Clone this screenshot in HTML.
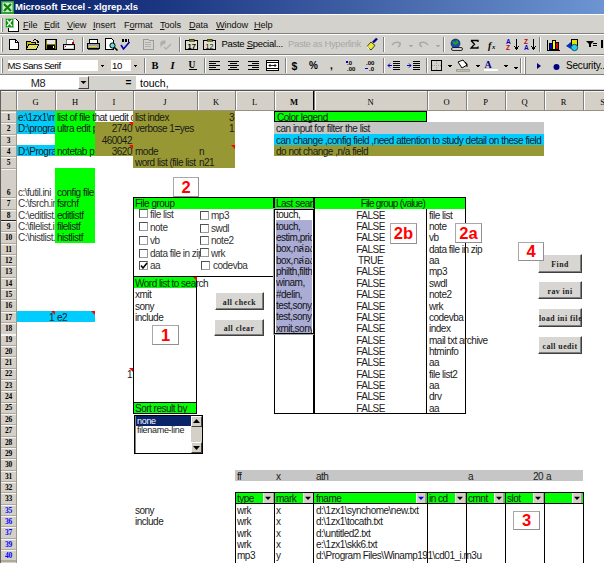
<!DOCTYPE html><html><head><meta charset="utf-8"><style>
*{margin:0;padding:0;box-sizing:border-box}
html,body{width:604px;height:563px;overflow:hidden;background:#fff;position:relative;font-family:"Liberation Sans",sans-serif}
.t{position:absolute;font-size:10px;line-height:11px;white-space:nowrap;color:#1a1a1a;letter-spacing:-0.5px;margin-top:1.1px}
.m{position:absolute;font-size:10px;line-height:12px;white-space:nowrap;color:#000}
.hd{position:absolute;font-family:"Liberation Serif",serif;font-size:8.5px;font-weight:normal;line-height:10px;text-align:center;color:#000}
.bn{position:absolute;background:#d8d6d2;border:1px solid;border-color:#fff #404040 #404040 #fff;box-shadow:inset -1px -1px #808080;font-family:"Liberation Serif",serif;font-weight:bold;font-size:7.8px;text-align:center;white-space:nowrap;letter-spacing:0.45px;color:#202020}
.nb{position:absolute;background:#fff;border:1px solid #a8a8a8;border-right-color:#909090;border-bottom-color:#909090;color:#f00;font-weight:bold;font-size:16.5px;text-align:center;line-height:17px}
.cb{position:absolute;width:9px;height:9px;background:#fff;border:1px solid #505050;border-right-color:#9a9a9a;border-bottom-color:#9a9a9a}
.ic{position:absolute}
</style></head><body>

<div style="position:absolute;left:0.00px;top:0.00px;width:604.00px;height:14.00px;background:linear-gradient(90deg,#0a246a 0%,#1a3480 25%,#6d95d2 100%)"></div>
<svg class="ic" style="left:0;top:0" width="15" height="15"><rect x="1" y="1" width="13" height="13" fill="#30a030"/><rect x="2.5" y="2.5" width="10" height="9.5" fill="#c8eec8"/><path d="M4 4l7 7M11 4l-7 7" stroke="#108010" stroke-width="2.2"/></svg>
<div style="position:absolute;left:15px;top:0px;font:bold 9.5px/14px 'Liberation Sans',sans-serif;color:#fff;white-space:nowrap">Microsoft Excel - xlgrep.xls</div>
<div style="position:absolute;left:0.00px;top:14.00px;width:604.00px;height:76.00px;background:#d4d2cc"></div>
<div style="position:absolute;left:0.00px;top:14.00px;width:604.00px;height:1.00px;background:#fff"></div>
<svg class="ic" style="left:0;top:14px" width="22" height="20" shape-rendering="crispEdges"><rect x="1" y="4" width="1" height="14" fill="#fff"/><rect x="2" y="4" width="1" height="14" fill="#808080"/><path d="M8.5 4.5h7l3 3v9.5h-10z" fill="#fff" stroke="#000"/><path d="M8.5 4.5h7" stroke="#909090"/><rect x="5" y="4" width="9" height="10" fill="#8fd08f"/><rect x="6" y="5" width="7" height="8" fill="#109010"/><path d="M7 6l5 6M12 6l-5 6" stroke="#fff" stroke-width="1.2" shape-rendering="auto"/></svg>
<div class="m" style="left:23px;top:18.5px;font-size:9.2px;letter-spacing:-0.1px;color:#111"><u>F</u>ile</div>
<div class="m" style="left:44px;top:18.5px;font-size:9.2px;letter-spacing:-0.1px;color:#111"><u>E</u>dit</div>
<div class="m" style="left:67px;top:18.5px;font-size:9.2px;letter-spacing:-0.1px;color:#111"><u>V</u>iew</div>
<div class="m" style="left:93px;top:18.5px;font-size:9.2px;letter-spacing:-0.1px;color:#111"><u>I</u>nsert</div>
<div class="m" style="left:124px;top:18.5px;font-size:9.2px;letter-spacing:-0.1px;color:#111">F<u>o</u>rmat</div>
<div class="m" style="left:160px;top:18.5px;font-size:9.2px;letter-spacing:-0.1px;color:#111"><u>T</u>ools</div>
<div class="m" style="left:189px;top:18.5px;font-size:9.2px;letter-spacing:-0.1px;color:#111"><u>D</u>ata</div>
<div class="m" style="left:216px;top:18.5px;font-size:9.2px;letter-spacing:-0.1px;color:#111"><u>W</u>indow</div>
<div class="m" style="left:254px;top:18.5px;font-size:9.2px;letter-spacing:-0.1px;color:#111"><u>H</u>elp</div>
<div style="position:absolute;left:0.00px;top:33.00px;width:604.00px;height:1.00px;background:#808080"></div>
<div style="position:absolute;left:0.00px;top:34.00px;width:604.00px;height:1.00px;background:#fff"></div>
<div style="position:absolute;left:0.00px;top:54.00px;width:604.00px;height:1.00px;background:#808080"></div>
<div style="position:absolute;left:0.00px;top:55.00px;width:604.00px;height:1.00px;background:#fff"></div>
<div style="position:absolute;left:0.00px;top:74.00px;width:604.00px;height:1.00px;background:#808080"></div>
<div style="position:absolute;left:0.00px;top:75.00px;width:604.00px;height:1.00px;background:#fff"></div>
<div style="position:absolute;left:1.00px;top:37.00px;width:2.00px;height:15.00px;border-left:1px solid #fff;border-right:1px solid #808080"></div>
<div style="position:absolute;left:1.00px;top:58.00px;width:2.00px;height:15.00px;border-left:1px solid #fff;border-right:1px solid #808080"></div>
<div style="position:absolute;left:82.00px;top:37.00px;width:2.00px;height:15.00px;border-left:1px solid #808080;border-right:1px solid #fff"></div>
<div style="position:absolute;left:179.00px;top:37.00px;width:2.00px;height:15.00px;border-left:1px solid #808080;border-right:1px solid #fff"></div>
<div style="position:absolute;left:383.00px;top:37.00px;width:2.00px;height:15.00px;border-left:1px solid #808080;border-right:1px solid #fff"></div>
<div style="position:absolute;left:443.00px;top:37.00px;width:2.00px;height:15.00px;border-left:1px solid #808080;border-right:1px solid #fff"></div>
<div style="position:absolute;left:539.00px;top:37.00px;width:2.00px;height:15.00px;border-left:1px solid #808080;border-right:1px solid #fff"></div>
<div style="position:absolute;left:524.00px;top:57.00px;width:2.00px;height:17.00px;border-left:1px solid #fff;border-right:1px solid #808080"></div>
<div style="position:absolute;left:144.00px;top:58.00px;width:2.00px;height:15.00px;border-left:1px solid #808080;border-right:1px solid #fff"></div>
<div style="position:absolute;left:204.00px;top:58.00px;width:2.00px;height:15.00px;border-left:1px solid #808080;border-right:1px solid #fff"></div>
<div style="position:absolute;left:285.00px;top:58.00px;width:2.00px;height:15.00px;border-left:1px solid #808080;border-right:1px solid #fff"></div>
<div style="position:absolute;left:383.00px;top:58.00px;width:2.00px;height:15.00px;border-left:1px solid #808080;border-right:1px solid #fff"></div>
<div style="position:absolute;left:426.00px;top:58.00px;width:2.00px;height:15.00px;border-left:1px solid #808080;border-right:1px solid #fff"></div>
<div style="position:absolute;left:520.00px;top:58.00px;width:2.00px;height:15.00px;border-left:1px solid #808080;border-right:1px solid #fff"></div>

<svg class="ic" style="left:0;top:33px" width="604" height="22" viewBox="0 33 604 22" shape-rendering="crispEdges">
<!-- new -->
<path d="M9.5 39.5h6l2.5 2.5v7.5h-8.5z" fill="#fff" stroke="#000"/>
<path d="M15.5 39.5v2.5h2.5" fill="none" stroke="#000"/>
<!-- open -->
<path d="M26.5 41.5h4l1 1h4v7h-9z" fill="#c8c000" stroke="#000"/>
<path d="M26.5 49.5l2-5h10l-2 5z" fill="#e0e060" stroke="#000"/>
<path d="M33 40.5q3-2 5 1" fill="none" stroke="#000"/>
<rect x="37" y="41" width="2" height="2" fill="#000"/>
<!-- save -->
<rect x="45.5" y="39.5" width="11" height="10" fill="#808000" stroke="#000"/>
<rect x="47" y="40" width="8" height="4" fill="#e8e8e8"/>
<rect x="47" y="45" width="8" height="4" fill="#000"/>
<rect x="53" y="46" width="1" height="2" fill="#fff"/>
<!-- mail -->
<path d="M66.5 39.5h6l1 1v4h-7z" fill="#fff" stroke="#808080"/>
<rect x="72" y="42" width="2" height="2" fill="#c00000"/>
<rect x="63.5" y="44.5" width="11" height="5" fill="#d4d0c8" stroke="#000"/>
<rect x="65" y="46" width="8" height="2" fill="#fff"/>
<rect x="65" y="46" width="1" height="1" fill="#800080"/>
<!-- print -->
<path d="M89.5 39.5h8v4h-8z" fill="#fff" stroke="#000"/>
<path d="M87.5 43.5h12v5h-12z" fill="#a0a0a0" stroke="#000"/>
<rect x="89" y="46" width="8" height="1" fill="#e0e000"/>
<rect x="88" y="49" width="11" height="1" fill="#404040"/>
<!-- preview -->
<path d="M105.5 38.5h6l2 2v9h-8z" fill="#fff" stroke="#000"/>
<circle cx="112.5" cy="45.5" r="2.6" fill="#60e0e0" stroke="#000" shape-rendering="auto"/>
<path d="M114.5 47.5l3 3" stroke="#000" stroke-width="1.6" shape-rendering="auto"/>
<!-- spelling -->
<rect x="122" y="39" width="2" height="3" fill="#000"/><rect x="125" y="39" width="2" height="3" fill="#000"/><rect x="128" y="39" width="1" height="3" fill="#000"/>
<path d="M121 45l2.5 4l6-7" stroke="#0000b0" stroke-width="1.6" fill="none" shape-rendering="auto"/>
<!-- research disabled -->
<path d="M143.5 39.5h5l1 1h4v9h-10z" fill="none" stroke="#9a9a9a"/>
<path d="M145 42h6M145 44h6M145 46h6" stroke="#b0b0b0"/>
<path d="M160 43q2-4 6-2l-1 3q-3 0-4 4z" fill="#b0b0b0" shape-rendering="auto"/>
<path d="M164 47l2 2l5-5" stroke="#b0b0b0" stroke-width="1.3" fill="none" shape-rendering="auto"/>
<!-- paste icons -->
<rect x="185.5" y="40.5" width="12" height="9" fill="#e0e0d0" stroke="#000"/>
<rect x="189" y="39" width="5" height="2" fill="#808000" stroke="#000" stroke-width="0.5"/>
<text x="187.5" y="48.5" font-size="7.5" font-weight="bold" font-family="Liberation Sans">17</text>
<rect x="203.5" y="40.5" width="12" height="9" fill="#e0e0d0" stroke="#000"/>
<rect x="207" y="39" width="5" height="2" fill="#808000" stroke="#000" stroke-width="0.5"/>
<text x="205.5" y="48.5" font-size="7" font-family="Liberation Sans">12</text>
<!-- format painter -->
<path d="M367 46.5l4-4.5l4 3.5l-4 4.5z" fill="#e8e840" stroke="#404000" shape-rendering="auto"/>
<path d="M367 46.5l2 2.5" stroke="#fff" stroke-width="1.2" shape-rendering="auto"/>
<path d="M373 42.5l4-4" stroke="#000080" stroke-width="2.4" shape-rendering="auto"/>
<!-- undo redo disabled -->
<path d="M392 45q3-4 8-2q1 2-2 4" stroke="#a8a8a8" stroke-width="1.5" fill="none" shape-rendering="auto"/>
<path d="M408 45h5l-2.5 2.5z" fill="#a8a8a8"/>
<path d="M428 45q-3-4-8-2q-1 2 2 4" stroke="#a8a8a8" stroke-width="1.5" fill="none" shape-rendering="auto"/>
<path d="M435 45h5l-2.5 2.5z" fill="#a8a8a8"/>
<!-- web -->
<circle cx="455.5" cy="43.5" r="4.5" fill="#1848c0" stroke="#000" stroke-width="0.5" shape-rendering="auto"/>
<path d="M452 41l3 1l2-2l1.5 3l-3 2l-2-1z" fill="#20a020" shape-rendering="auto"/>
<rect x="451.5" y="47.5" width="11" height="3" rx="1.5" fill="#d0d0d0" stroke="#000" stroke-width="0.8" shape-rendering="auto"/>
<!-- sum -->
<path d="M471 40.5h7v1.5M471 40.5l3.5 3.7l-3.5 3.8h7v-1.5" stroke="#000" stroke-width="1.3" fill="none" shape-rendering="auto"/>
<text x="488" y="48.5" font-size="10" font-family="Liberation Serif" font-style="italic" font-weight="bold">f</text>
<text x="492" y="48.5" font-size="6.5" font-family="Liberation Serif" font-style="italic" font-weight="bold">x</text>
<!-- sort -->
<text x="506" y="43.8" font-size="6.5" font-weight="bold" fill="#0000c0" font-family="Liberation Sans">A</text>
<text x="506" y="50" font-size="6.5" font-weight="bold" fill="#c00000" font-family="Liberation Sans">Z</text>
<path d="M516.5 38.5v11m-2-3l2 3l2-3" stroke="#000" fill="none"/>
<text x="524" y="43.8" font-size="6.5" font-weight="bold" fill="#c00000" font-family="Liberation Sans">Z</text>
<text x="524" y="50" font-size="6.5" font-weight="bold" fill="#0000c0" font-family="Liberation Sans">A</text>
<path d="M533.5 38.5v11m-2-3l2 3l2-3" stroke="#000" fill="none"/>
<!-- chart -->
<path d="M547.5 39.5v10.5h12" stroke="#000" fill="none"/>
<rect x="549.5" y="43.5" width="3" height="6" fill="#0000e0" stroke="#000"/>
<rect x="552.5" y="40.5" width="3" height="9" fill="#ffff00" stroke="#000"/>
<rect x="555.5" y="42.5" width="3" height="7" fill="#e00000" stroke="#000"/>
<!-- drawing -->
<rect x="571.5" y="39.5" width="6" height="6" fill="#e8e000" stroke="#000"/>
<circle cx="574.5" cy="47.5" r="3.2" fill="#20d0f0" stroke="#000" stroke-width="0.6" shape-rendering="auto"/>
<path d="M566 46l5-4v7z" fill="#0030c0" shape-rendering="auto"/>
<!-- filter -->
<path d="M586 41h8l-3 3v3l-2 0v-3z" fill="#000" shape-rendering="auto"/>
<path d="M593 43.5h4M593 45.5h4" stroke="#000"/>
<rect x="601" y="40" width="2" height="8" fill="#000"/>
</svg>

<div class="m" style="left:221.5px;top:38px;font-size:9.5px;letter-spacing:-0.3px">Paste <u>S</u>pecial...</div>
<div class="m" style="left:288px;top:38px;font-size:9.5px;letter-spacing:-0.35px;color:#a8a8a8">Paste as Hyperlink</div>
<div style="position:absolute;left:7.00px;top:59.00px;width:100.00px;height:13.00px;background:#fff;border:1px solid #d4d0c8"></div>
<div class="m" style="left:7.5px;top:59.5px;font-size:9.5px;letter-spacing:-0.6px">MS Sans Serif</div>
<div style="position:absolute;left:98.00px;top:60.00px;width:8.00px;height:11.00px;background:#d4d0c8"></div>
<div style="position:absolute;left:110.00px;top:59.00px;width:30.00px;height:13.00px;background:#fff;border:1px solid #d4d0c8"></div>
<div class="m" style="left:112px;top:59.5px;font-size:9.5px;letter-spacing:-0.3px">10</div>
<div style="position:absolute;left:131.00px;top:60.00px;width:8.00px;height:11.00px;background:#d4d0c8"></div>

<svg class="ic" style="left:0;top:55px" width="604" height="20" viewBox="0 55 604 20" shape-rendering="crispEdges">
<path d="M100 64.5h5l-2.5 2.5z" fill="#000"/>
<path d="M133 64.5h5l-2.5 2.5z" fill="#000"/>
<text x="151.5" y="69" font-size="10.5" font-weight="bold" font-family="Liberation Serif">B</text>
<text x="170.5" y="69" font-size="10.5" font-weight="bold" font-style="italic" font-family="Liberation Serif">I</text>
<text x="188.5" y="68" font-size="9.5" font-weight="bold" font-family="Liberation Serif">U</text>
<rect x="189" y="69" width="8" height="1" fill="#000"/>
<path d="M209 61.5h11M209 63.5h7M209 65.5h11M209 67.5h7M209 69.5h11" stroke="#000"/>
<path d="M228 61.5h11M230 63.5h7M228 65.5h11M230 67.5h7M228 69.5h11" stroke="#000"/>
<path d="M248 61.5h11M252 63.5h7M248 65.5h11M252 67.5h7M248 69.5h11" stroke="#000"/>
<rect x="266.5" y="60.5" width="12" height="10" fill="#fff" stroke="#000"/>
<path d="M267 62.5h11M267 68.5h11" stroke="#000"/>
<path d="M269 65.5h7M269 65.5l1.5-1.5M269 65.5l1.5 1.5M276 65.5l-1.5-1.5M276 65.5l-1.5 1.5" stroke="#000" stroke-width="0.9" shape-rendering="auto"/>
<text x="291.5" y="69.5" font-size="10.5" font-weight="bold" font-family="Liberation Sans">$</text>
<text x="309" y="69" font-size="10" font-weight="bold" font-family="Liberation Sans">%</text>
<text x="330" y="69" font-size="10" font-weight="bold" font-family="Liberation Sans">,</text>
<text x="347" y="64.5" font-size="6" font-weight="bold" font-family="Liberation Sans">.0</text>
<text x="347" y="70.5" font-size="6" font-weight="bold" font-family="Liberation Sans">.00</text>
<rect x="346" y="61" width="1.5" height="1.5" fill="#0000c0"/>
<text x="366" y="64.5" font-size="6" font-weight="bold" font-family="Liberation Sans">.00</text>
<text x="369" y="70.5" font-size="6" font-weight="bold" font-family="Liberation Sans">.0</text>
<path d="M365 68.5h3" stroke="#0000c0"/>
<path d="M393 61.5h7M393 63.5h7M393 65.5h7M393 67.5h7M393 69.5h7" stroke="#000"/>
<path d="M388 65.5h4M388 65.5l2-2M388 65.5l2 2" stroke="#0000c0" shape-rendering="auto"/>
<path d="M413 61.5h7M413 63.5h7M413 65.5h7M413 67.5h7M413 69.5h7" stroke="#000"/>
<path d="M407 65.5h4M411 65.5l-2-2M411 65.5l-2 2" stroke="#0000c0" shape-rendering="auto"/>
<rect x="431.5" y="60.5" width="10" height="10" fill="none" stroke="#000"/>
<path d="M432 65.5h9M436.5 61v9" stroke="#a0a0a0" stroke-dasharray="1 1"/>
<path d="M447 65h5l-2.5 2.5z" fill="#000"/>
<path d="M458 62l5-2l4 5l-5 3z" fill="#fff" stroke="#000" shape-rendering="auto"/>
<path d="M465 62q3 1 2 5" stroke="#000" fill="none" shape-rendering="auto"/>
<rect x="456" y="69" width="13" height="2" fill="#c0c0a0" stroke="#808080" stroke-width="0.5"/>
<path d="M475 65h5l-2.5 2.5z" fill="#000"/>
<text x="484.5" y="67.5" font-size="10" font-weight="bold" fill="#000080" font-family="Liberation Serif">A</text>
<rect x="484" y="69" width="14" height="2" fill="#fff"/>
<path d="M503 65h5l-2.5 2.5z" fill="#000"/>
<path d="M513 67h5l-2.5 2.5z" fill="#000"/>
<path d="M537 63v6l4-3z" fill="#000080" shape-rendering="auto"/>
<circle cx="556.5" cy="67" r="3" fill="#000080" shape-rendering="auto"/>
</svg>

<div class="m" style="left:566px;top:60px;font-size:10px;letter-spacing:-0.2px">Security...</div>
<div style="position:absolute;left:0.00px;top:76.00px;width:78.00px;height:13.00px;background:#fff"></div>
<div class="m" style="left:0;top:76.5px;width:76px;text-align:center;font-size:11px;letter-spacing:-0.3px;color:#222">M8</div>
<div style="position:absolute;left:78.00px;top:76.00px;width:11.00px;height:13.00px;background:#d4d0c8;border:1px solid;border-color:#fff #404040 #404040 #fff"></div>
<svg class="ic" style="left:78px;top:76px" width="11" height="13"><path d="M2.5 5h6l-3 3z" fill="#000"/></svg>
<div class="m" style="left:125.5px;top:77px;font-size:10px;font-weight:bold">=</div>
<div style="position:absolute;left:136.00px;top:76.00px;width:468.00px;height:13.00px;background:#fff"></div>
<div class="m" style="left:140px;top:76.5px;font-size:10.5px;letter-spacing:0px">touch,</div>
<div style="position:absolute;left:0.00px;top:90.00px;width:604.00px;height:1.00px;background:#505050"></div>
<div style="position:absolute;left:0.00px;top:91.00px;width:604.00px;height:19.00px;background:#d4d0c8"></div>
<div style="position:absolute;left:0.00px;top:91.00px;width:604.00px;height:1.00px;background:#f4f4f4"></div>
<div style="position:absolute;left:16.00px;top:91.00px;width:1.00px;height:19.00px;background:#808080"></div>
<div style="position:absolute;left:17.00px;top:91.00px;width:1.00px;height:19.00px;background:#fff"></div>
<div style="position:absolute;left:55.00px;top:91.00px;width:1.00px;height:19.00px;background:#808080"></div>
<div style="position:absolute;left:56.00px;top:91.00px;width:1.00px;height:19.00px;background:#fff"></div>
<div class="hd" style="left:16px;top:97px;width:39px;">G</div>
<div style="position:absolute;left:95.00px;top:91.00px;width:1.00px;height:19.00px;background:#808080"></div>
<div style="position:absolute;left:96.00px;top:91.00px;width:1.00px;height:19.00px;background:#fff"></div>
<div class="hd" style="left:55px;top:97px;width:40px;">H</div>
<div style="position:absolute;left:133.00px;top:91.00px;width:1.00px;height:19.00px;background:#808080"></div>
<div style="position:absolute;left:134.00px;top:91.00px;width:1.00px;height:19.00px;background:#fff"></div>
<div class="hd" style="left:95px;top:97px;width:38px;">I</div>
<div style="position:absolute;left:197.00px;top:91.00px;width:1.00px;height:19.00px;background:#808080"></div>
<div style="position:absolute;left:198.00px;top:91.00px;width:1.00px;height:19.00px;background:#fff"></div>
<div class="hd" style="left:133px;top:97px;width:64px;">J</div>
<div style="position:absolute;left:235.00px;top:91.00px;width:1.00px;height:19.00px;background:#808080"></div>
<div style="position:absolute;left:236.00px;top:91.00px;width:1.00px;height:19.00px;background:#fff"></div>
<div class="hd" style="left:197px;top:97px;width:38px;">K</div>
<div style="position:absolute;left:274.00px;top:91.00px;width:1.00px;height:19.00px;background:#808080"></div>
<div style="position:absolute;left:275.00px;top:91.00px;width:1.00px;height:19.00px;background:#fff"></div>
<div class="hd" style="left:235px;top:97px;width:39px;">L</div>
<div style="position:absolute;left:314.00px;top:91.00px;width:1.00px;height:19.00px;background:#808080"></div>
<div style="position:absolute;left:315.00px;top:91.00px;width:1.00px;height:19.00px;background:#fff"></div>
<div class="hd" style="left:274px;top:97px;width:40px;font-weight:bold">M</div>
<div style="position:absolute;left:427.00px;top:91.00px;width:1.00px;height:19.00px;background:#808080"></div>
<div style="position:absolute;left:428.00px;top:91.00px;width:1.00px;height:19.00px;background:#fff"></div>
<div class="hd" style="left:314px;top:97px;width:113px;">N</div>
<div style="position:absolute;left:466.00px;top:91.00px;width:1.00px;height:19.00px;background:#808080"></div>
<div style="position:absolute;left:467.00px;top:91.00px;width:1.00px;height:19.00px;background:#fff"></div>
<div class="hd" style="left:427px;top:97px;width:39px;">O</div>
<div style="position:absolute;left:505.00px;top:91.00px;width:1.00px;height:19.00px;background:#808080"></div>
<div style="position:absolute;left:506.00px;top:91.00px;width:1.00px;height:19.00px;background:#fff"></div>
<div class="hd" style="left:466px;top:97px;width:39px;">P</div>
<div style="position:absolute;left:544.00px;top:91.00px;width:1.00px;height:19.00px;background:#808080"></div>
<div style="position:absolute;left:545.00px;top:91.00px;width:1.00px;height:19.00px;background:#fff"></div>
<div class="hd" style="left:505px;top:97px;width:39px;">Q</div>
<div style="position:absolute;left:583.00px;top:91.00px;width:1.00px;height:19.00px;background:#808080"></div>
<div style="position:absolute;left:584.00px;top:91.00px;width:1.00px;height:19.00px;background:#fff"></div>
<div class="hd" style="left:544px;top:97px;width:39px;">R</div>
<div style="position:absolute;left:622.00px;top:91.00px;width:1.00px;height:19.00px;background:#808080"></div>
<div style="position:absolute;left:623.00px;top:91.00px;width:1.00px;height:19.00px;background:#fff"></div>
<div class="hd" style="left:583px;top:97px;width:39px;">S</div>
<div style="position:absolute;left:313.00px;top:91.00px;width:1.00px;height:19.00px;background:#000"></div>
<div style="position:absolute;left:0.00px;top:110.00px;width:604.00px;height:1.00px;background:#9a9080"></div>
<div style="position:absolute;left:0.00px;top:111.00px;width:16.00px;height:452.00px;background:#d4d0c8"></div>
<div style="position:absolute;left:16.00px;top:111.00px;width:1.00px;height:452.00px;background:#a09888"></div>
<div style="position:absolute;left:0.00px;top:91.00px;width:1.00px;height:472.00px;background:#606060"></div>
<div style="position:absolute;left:1.00px;top:112.00px;width:15.00px;height:1.00px;background:#f4f4f4"></div>
<div style="position:absolute;left:1.00px;top:122.00px;width:15.00px;height:1.00px;background:#b0a898"></div>
<div class="hd" style="left:0.5px;top:111.77px;width:16px;line-height:11px;color:#000;font-size:7.5px;font-weight:bold;letter-spacing:-0.2px">1</div>
<div style="position:absolute;left:1.00px;top:123.00px;width:15.00px;height:1.00px;background:#f4f4f4"></div>
<div style="position:absolute;left:1.00px;top:134.00px;width:15.00px;height:1.00px;background:#b0a898"></div>
<div class="hd" style="left:0.5px;top:123.14px;width:16px;line-height:11px;color:#000;font-size:7.5px;font-weight:bold;letter-spacing:-0.2px">2</div>
<div style="position:absolute;left:1.00px;top:135.00px;width:15.00px;height:1.00px;background:#f4f4f4"></div>
<div style="position:absolute;left:1.00px;top:145.00px;width:15.00px;height:1.00px;background:#b0a898"></div>
<div class="hd" style="left:0.5px;top:134.51px;width:16px;line-height:11px;color:#000;font-size:7.5px;font-weight:bold;letter-spacing:-0.2px">3</div>
<div style="position:absolute;left:1.00px;top:146.00px;width:15.00px;height:1.00px;background:#f4f4f4"></div>
<div style="position:absolute;left:1.00px;top:156.00px;width:15.00px;height:1.00px;background:#b0a898"></div>
<div class="hd" style="left:0.5px;top:145.88px;width:16px;line-height:11px;color:#000;font-size:7.5px;font-weight:bold;letter-spacing:-0.2px">4</div>
<div style="position:absolute;left:1.00px;top:157.00px;width:15.00px;height:1.00px;background:#f4f4f4"></div>
<div style="position:absolute;left:1.00px;top:168.00px;width:15.00px;height:1.00px;background:#b0a898"></div>
<div class="hd" style="left:0.5px;top:157.10px;width:16px;line-height:11px;color:#000;font-size:7.5px;font-weight:bold;letter-spacing:-0.2px">5</div>
<div style="position:absolute;left:1.00px;top:169.00px;width:15.00px;height:1.00px;background:#f4f4f4"></div>
<div style="position:absolute;left:1.00px;top:197.00px;width:15.00px;height:1.00px;background:#b0a898"></div>
<div class="hd" style="left:0.5px;top:186.80px;width:16px;line-height:11px;color:#000;font-size:7.5px;font-weight:bold;letter-spacing:-0.2px">6</div>
<div style="position:absolute;left:1.00px;top:198.00px;width:15.00px;height:1.00px;background:#f4f4f4"></div>
<div style="position:absolute;left:1.00px;top:209.00px;width:15.00px;height:1.00px;background:#b0a898"></div>
<div class="hd" style="left:0.5px;top:198.15px;width:16px;line-height:11px;color:#000;font-size:7.5px;font-weight:bold;letter-spacing:-0.2px">7</div>
<div style="position:absolute;left:1.00px;top:210.00px;width:15.00px;height:1.00px;background:#f4f4f4"></div>
<div style="position:absolute;left:1.00px;top:220.00px;width:15.00px;height:1.00px;background:#b0a898"></div>
<div style="position:absolute;left:1.00px;top:220.00px;width:15.00px;height:1.00px;background:#202020"></div>
<div class="hd" style="left:0.5px;top:209.50px;width:16px;line-height:11px;color:#000;font-size:7.5px;font-weight:bold;letter-spacing:-0.2px">8</div>
<div style="position:absolute;left:1.00px;top:221.00px;width:15.00px;height:1.00px;background:#f4f4f4"></div>
<div style="position:absolute;left:1.00px;top:231.00px;width:15.00px;height:1.00px;background:#b0a898"></div>
<div class="hd" style="left:0.5px;top:220.85px;width:16px;line-height:11px;color:#000;font-size:7.5px;font-weight:bold;letter-spacing:-0.2px">9</div>
<div style="position:absolute;left:1.00px;top:232.00px;width:15.00px;height:1.00px;background:#f4f4f4"></div>
<div style="position:absolute;left:1.00px;top:243.00px;width:15.00px;height:1.00px;background:#b0a898"></div>
<div class="hd" style="left:0.5px;top:232.20px;width:16px;line-height:11px;color:#000;font-size:7.5px;font-weight:bold;letter-spacing:-0.2px">10</div>
<div style="position:absolute;left:1.00px;top:244.00px;width:15.00px;height:1.00px;background:#f4f4f4"></div>
<div style="position:absolute;left:1.00px;top:254.00px;width:15.00px;height:1.00px;background:#b0a898"></div>
<div class="hd" style="left:0.5px;top:243.55px;width:16px;line-height:11px;color:#000;font-size:7.5px;font-weight:bold;letter-spacing:-0.2px">11</div>
<div style="position:absolute;left:1.00px;top:255.00px;width:15.00px;height:1.00px;background:#f4f4f4"></div>
<div style="position:absolute;left:1.00px;top:265.00px;width:15.00px;height:1.00px;background:#b0a898"></div>
<div class="hd" style="left:0.5px;top:254.90px;width:16px;line-height:11px;color:#000;font-size:7.5px;font-weight:bold;letter-spacing:-0.2px">12</div>
<div style="position:absolute;left:1.00px;top:266.00px;width:15.00px;height:1.00px;background:#f4f4f4"></div>
<div style="position:absolute;left:1.00px;top:277.00px;width:15.00px;height:1.00px;background:#b0a898"></div>
<div class="hd" style="left:0.5px;top:266.25px;width:16px;line-height:11px;color:#000;font-size:7.5px;font-weight:bold;letter-spacing:-0.2px">13</div>
<div style="position:absolute;left:1.00px;top:278.00px;width:15.00px;height:1.00px;background:#f4f4f4"></div>
<div style="position:absolute;left:1.00px;top:288.00px;width:15.00px;height:1.00px;background:#b0a898"></div>
<div class="hd" style="left:0.5px;top:277.60px;width:16px;line-height:11px;color:#000;font-size:7.5px;font-weight:bold;letter-spacing:-0.2px">14</div>
<div style="position:absolute;left:1.00px;top:289.00px;width:15.00px;height:1.00px;background:#f4f4f4"></div>
<div style="position:absolute;left:1.00px;top:299.00px;width:15.00px;height:1.00px;background:#b0a898"></div>
<div class="hd" style="left:0.5px;top:288.95px;width:16px;line-height:11px;color:#000;font-size:7.5px;font-weight:bold;letter-spacing:-0.2px">15</div>
<div style="position:absolute;left:1.00px;top:300.00px;width:15.00px;height:1.00px;background:#f4f4f4"></div>
<div style="position:absolute;left:1.00px;top:311.00px;width:15.00px;height:1.00px;background:#b0a898"></div>
<div class="hd" style="left:0.5px;top:300.30px;width:16px;line-height:11px;color:#000;font-size:7.5px;font-weight:bold;letter-spacing:-0.2px">16</div>
<div style="position:absolute;left:1.00px;top:312.00px;width:15.00px;height:1.00px;background:#f4f4f4"></div>
<div style="position:absolute;left:1.00px;top:322.00px;width:15.00px;height:1.00px;background:#b0a898"></div>
<div class="hd" style="left:0.5px;top:311.65px;width:16px;line-height:11px;color:#000;font-size:7.5px;font-weight:bold;letter-spacing:-0.2px">17</div>
<div style="position:absolute;left:1.00px;top:323.00px;width:15.00px;height:1.00px;background:#f4f4f4"></div>
<div style="position:absolute;left:1.00px;top:334.00px;width:15.00px;height:0.00px;background:#b0a898"></div>
<div class="hd" style="left:0.5px;top:323.00px;width:16px;line-height:11px;color:#000;font-size:7.5px;font-weight:bold;letter-spacing:-0.2px">18</div>
<div style="position:absolute;left:1.00px;top:334.00px;width:15.00px;height:2.00px;background:#f4f4f4"></div>
<div style="position:absolute;left:1.00px;top:345.00px;width:15.00px;height:1.00px;background:#b0a898"></div>
<div class="hd" style="left:0.5px;top:334.35px;width:16px;line-height:11px;color:#000;font-size:7.5px;font-weight:bold;letter-spacing:-0.2px">19</div>
<div style="position:absolute;left:1.00px;top:346.00px;width:15.00px;height:1.00px;background:#f4f4f4"></div>
<div style="position:absolute;left:1.00px;top:356.00px;width:15.00px;height:1.00px;background:#b0a898"></div>
<div class="hd" style="left:0.5px;top:345.70px;width:16px;line-height:11px;color:#000;font-size:7.5px;font-weight:bold;letter-spacing:-0.2px">20</div>
<div style="position:absolute;left:1.00px;top:357.00px;width:15.00px;height:1.00px;background:#f4f4f4"></div>
<div style="position:absolute;left:1.00px;top:368.00px;width:15.00px;height:1.00px;background:#b0a898"></div>
<div class="hd" style="left:0.5px;top:357.05px;width:16px;line-height:11px;color:#000;font-size:7.5px;font-weight:bold;letter-spacing:-0.2px">21</div>
<div style="position:absolute;left:1.00px;top:369.00px;width:15.00px;height:1.00px;background:#f4f4f4"></div>
<div style="position:absolute;left:1.00px;top:379.00px;width:15.00px;height:1.00px;background:#b0a898"></div>
<div class="hd" style="left:0.5px;top:368.40px;width:16px;line-height:11px;color:#000;font-size:7.5px;font-weight:bold;letter-spacing:-0.2px">22</div>
<div style="position:absolute;left:1.00px;top:380.00px;width:15.00px;height:1.00px;background:#f4f4f4"></div>
<div style="position:absolute;left:1.00px;top:390.00px;width:15.00px;height:1.00px;background:#b0a898"></div>
<div class="hd" style="left:0.5px;top:379.75px;width:16px;line-height:11px;color:#000;font-size:7.5px;font-weight:bold;letter-spacing:-0.2px">23</div>
<div style="position:absolute;left:1.00px;top:391.00px;width:15.00px;height:1.00px;background:#f4f4f4"></div>
<div style="position:absolute;left:1.00px;top:402.00px;width:15.00px;height:1.00px;background:#b0a898"></div>
<div class="hd" style="left:0.5px;top:391.10px;width:16px;line-height:11px;color:#000;font-size:7.5px;font-weight:bold;letter-spacing:-0.2px">24</div>
<div style="position:absolute;left:1.00px;top:403.00px;width:15.00px;height:1.00px;background:#f4f4f4"></div>
<div style="position:absolute;left:1.00px;top:413.00px;width:15.00px;height:1.00px;background:#b0a898"></div>
<div class="hd" style="left:0.5px;top:402.45px;width:16px;line-height:11px;color:#000;font-size:7.5px;font-weight:bold;letter-spacing:-0.2px">25</div>
<div style="position:absolute;left:1.00px;top:414.00px;width:15.00px;height:1.00px;background:#f4f4f4"></div>
<div style="position:absolute;left:1.00px;top:424.00px;width:15.00px;height:1.00px;background:#b0a898"></div>
<div class="hd" style="left:0.5px;top:413.80px;width:16px;line-height:11px;color:#000;font-size:7.5px;font-weight:bold;letter-spacing:-0.2px">26</div>
<div style="position:absolute;left:1.00px;top:425.00px;width:15.00px;height:1.00px;background:#f4f4f4"></div>
<div style="position:absolute;left:1.00px;top:436.00px;width:15.00px;height:1.00px;background:#b0a898"></div>
<div class="hd" style="left:0.5px;top:425.15px;width:16px;line-height:11px;color:#000;font-size:7.5px;font-weight:bold;letter-spacing:-0.2px">27</div>
<div style="position:absolute;left:1.00px;top:437.00px;width:15.00px;height:1.00px;background:#f4f4f4"></div>
<div style="position:absolute;left:1.00px;top:447.00px;width:15.00px;height:1.00px;background:#b0a898"></div>
<div class="hd" style="left:0.5px;top:436.50px;width:16px;line-height:11px;color:#000;font-size:7.5px;font-weight:bold;letter-spacing:-0.2px">28</div>
<div style="position:absolute;left:1.00px;top:448.00px;width:15.00px;height:1.00px;background:#f4f4f4"></div>
<div style="position:absolute;left:1.00px;top:458.00px;width:15.00px;height:1.00px;background:#b0a898"></div>
<div class="hd" style="left:0.5px;top:447.85px;width:16px;line-height:11px;color:#000;font-size:7.5px;font-weight:bold;letter-spacing:-0.2px">29</div>
<div style="position:absolute;left:1.00px;top:459.00px;width:15.00px;height:1.00px;background:#f4f4f4"></div>
<div style="position:absolute;left:1.00px;top:470.00px;width:15.00px;height:1.00px;background:#b0a898"></div>
<div class="hd" style="left:0.5px;top:459.20px;width:16px;line-height:11px;color:#000;font-size:7.5px;font-weight:bold;letter-spacing:-0.2px">30</div>
<div style="position:absolute;left:1.00px;top:471.00px;width:15.00px;height:1.00px;background:#f4f4f4"></div>
<div style="position:absolute;left:1.00px;top:481.00px;width:15.00px;height:1.00px;background:#b0a898"></div>
<div class="hd" style="left:0.5px;top:470.55px;width:16px;line-height:11px;color:#000;font-size:7.5px;font-weight:bold;letter-spacing:-0.2px">31</div>
<div style="position:absolute;left:1.00px;top:482.00px;width:15.00px;height:1.00px;background:#f4f4f4"></div>
<div style="position:absolute;left:1.00px;top:492.00px;width:15.00px;height:1.00px;background:#b0a898"></div>
<div class="hd" style="left:0.5px;top:481.90px;width:16px;line-height:11px;color:#000;font-size:7.5px;font-weight:bold;letter-spacing:-0.2px">32</div>
<div style="position:absolute;left:1.00px;top:493.00px;width:15.00px;height:1.00px;background:#f4f4f4"></div>
<div style="position:absolute;left:1.00px;top:504.00px;width:15.00px;height:1.00px;background:#b0a898"></div>
<div class="hd" style="left:0.5px;top:493.25px;width:16px;line-height:11px;color:#000;font-size:7.5px;font-weight:bold;letter-spacing:-0.2px">33</div>
<div style="position:absolute;left:1.00px;top:505.00px;width:15.00px;height:1.00px;background:#f4f4f4"></div>
<div style="position:absolute;left:1.00px;top:515.00px;width:15.00px;height:1.00px;background:#b0a898"></div>
<div class="hd" style="left:0.5px;top:504.60px;width:16px;line-height:11px;color:#0000ff;font-size:7.5px;font-weight:bold;letter-spacing:-0.2px">35</div>
<div style="position:absolute;left:1.00px;top:516.00px;width:15.00px;height:1.00px;background:#f4f4f4"></div>
<div style="position:absolute;left:1.00px;top:526.00px;width:15.00px;height:1.00px;background:#b0a898"></div>
<div class="hd" style="left:0.5px;top:515.95px;width:16px;line-height:11px;color:#0000ff;font-size:7.5px;font-weight:bold;letter-spacing:-0.2px">36</div>
<div style="position:absolute;left:1.00px;top:527.00px;width:15.00px;height:1.00px;background:#f4f4f4"></div>
<div style="position:absolute;left:1.00px;top:538.00px;width:15.00px;height:1.00px;background:#b0a898"></div>
<div class="hd" style="left:0.5px;top:527.30px;width:16px;line-height:11px;color:#0000ff;font-size:7.5px;font-weight:bold;letter-spacing:-0.2px">37</div>
<div style="position:absolute;left:1.00px;top:539.00px;width:15.00px;height:1.00px;background:#f4f4f4"></div>
<div style="position:absolute;left:1.00px;top:549.00px;width:15.00px;height:1.00px;background:#b0a898"></div>
<div class="hd" style="left:0.5px;top:538.65px;width:16px;line-height:11px;color:#0000ff;font-size:7.5px;font-weight:bold;letter-spacing:-0.2px">39</div>
<div style="position:absolute;left:1.00px;top:550.00px;width:15.00px;height:1.00px;background:#f4f4f4"></div>
<div style="position:absolute;left:1.00px;top:560.00px;width:15.00px;height:2.00px;background:#b0a898"></div>
<div class="hd" style="left:0.5px;top:550.00px;width:16px;line-height:11px;color:#0000ff;font-size:7.5px;font-weight:bold;letter-spacing:-0.2px">40</div>
<div style="position:absolute;left:17.00px;top:111.00px;width:38.00px;height:23.00px;background:#00ccff;"></div>
<div style="position:absolute;left:17.00px;top:145.00px;width:38.00px;height:11.00px;background:#00ccff;"></div>
<div style="position:absolute;left:55.00px;top:111.00px;width:40.00px;height:45.00px;background:#00ff00;"></div>
<div style="position:absolute;left:55.00px;top:168.00px;width:40.00px;height:75.00px;background:#00ff00;"></div>
<div style="position:absolute;left:95.00px;top:122.00px;width:38.00px;height:34.00px;background:#979833;"></div>
<div style="position:absolute;left:133.00px;top:111.00px;width:102.00px;height:57.00px;background:#979833;"></div>
<div style="position:absolute;left:274.00px;top:122.00px;width:270.00px;height:12.00px;background:#c6c6c6;"></div>
<div style="position:absolute;left:274.00px;top:134.00px;width:270.00px;height:11.00px;background:#00ccff;"></div>
<div style="position:absolute;left:274.00px;top:145.00px;width:270.00px;height:11.00px;background:#979833;"></div>
<div style="position:absolute;left:274.00px;top:111.00px;width:153.00px;height:11.00px;background:#00ff00;border:1px solid #000"></div>
<div style="position:absolute;left:17.00px;top:311.00px;width:78.00px;height:11.00px;background:#00ccff;"></div>
<div class="t" style="left:16.00px;top:110.89px;width:39.00px;overflow:hidden;padding-left:2px;">e:\1zx1\mmmm</div>
<div class="t" style="left:16.00px;top:122.26px;width:39.00px;overflow:hidden;padding-left:2px;">D:\program files</div>
<div class="t" style="left:16.00px;top:145.00px;width:39.00px;overflow:hidden;padding-left:2px;">D:\Program files</div>
<div class="t" style="left:55.00px;top:110.89px;width:78.00px;overflow:hidden;padding-left:2px;">list of file that uedit c</div>
<div class="t" style="left:55.00px;top:122.26px;width:40.00px;overflow:hidden;padding-left:2px;">ultra edit p</div>
<div class="t" style="left:55.00px;top:145.00px;width:40.00px;overflow:hidden;padding-left:2px;">notetab p</div>
<div class="t" style="left:95.00px;top:122.26px;width:38.00px;overflow:hidden;text-align:right;padding-right:1px;">2740</div>
<div class="t" style="left:95.00px;top:133.63px;width:38.00px;overflow:hidden;text-align:right;padding-right:1px;">460042</div>
<div class="t" style="left:95.00px;top:145.00px;width:38.00px;overflow:hidden;text-align:right;padding-right:1px;">3620</div>
<div class="t" style="left:133.00px;top:110.89px;width:64.00px;overflow:hidden;padding-left:2px;">list index</div>
<div class="t" style="left:197.00px;top:110.89px;width:38.00px;overflow:hidden;text-align:right;padding-right:1px;">3</div>
<div class="t" style="left:133.00px;top:122.26px;width:64.00px;overflow:hidden;padding-left:2px;">verbose 1=yes</div>
<div class="t" style="left:197.00px;top:122.26px;width:38.00px;overflow:hidden;text-align:right;padding-right:1px;">1</div>
<div class="t" style="left:133.00px;top:145.00px;width:64.00px;overflow:hidden;padding-left:2px;">mode</div>
<div class="t" style="left:197.00px;top:145.00px;width:38.00px;overflow:hidden;padding-left:2px;">n</div>
<div class="t" style="left:133.00px;top:156.22px;width:64.00px;overflow:hidden;padding-left:2px;">word list (file list</div>
<div class="t" style="left:197.00px;top:156.22px;width:38.00px;overflow:hidden;padding-left:2px;">n21</div>
<div class="t" style="left:274.00px;top:110.89px;width:153.00px;overflow:hidden;padding-left:2px;padding-left:3px">Color legend</div>
<div class="t" style="left:274.00px;top:122.26px;width:270.00px;overflow:hidden;padding-left:2px;">can input for filter the list</div>
<div class="t" style="left:274.00px;top:133.63px;width:270.00px;overflow:hidden;padding-left:2px;">can change ,config field ,need attention to study detail on these field</div>
<div class="t" style="left:274.00px;top:145.00px;width:270.00px;overflow:hidden;padding-left:2px;">do not change ,n/a field</div>
<div class="t" style="left:16.00px;top:185.92px;width:39.00px;overflow:hidden;padding-left:2px;color:#3a3a3a">c:\futil.ini</div>
<div class="t" style="left:16.00px;top:197.27px;width:39.00px;overflow:hidden;padding-left:2px;color:#3a3a3a">C:\fsrch.ini</div>
<div class="t" style="left:16.00px;top:208.62px;width:39.00px;overflow:hidden;padding-left:2px;color:#3a3a3a">C:\editlist.ini</div>
<div class="t" style="left:16.00px;top:219.97px;width:39.00px;overflow:hidden;padding-left:2px;color:#3a3a3a">C:\filelist.ini</div>
<div class="t" style="left:16.00px;top:231.32px;width:39.00px;overflow:hidden;padding-left:2px;color:#3a3a3a">C:\histlist.ini</div>
<div class="t" style="left:55.00px;top:185.92px;width:78.00px;overflow:hidden;padding-left:2px;">config file</div>
<div class="t" style="left:55.00px;top:197.27px;width:78.00px;overflow:hidden;padding-left:2px;">fsrchf</div>
<div class="t" style="left:55.00px;top:208.62px;width:78.00px;overflow:hidden;padding-left:2px;">editlistf</div>
<div class="t" style="left:55.00px;top:219.97px;width:78.00px;overflow:hidden;padding-left:2px;">filelistf</div>
<div class="t" style="left:55.00px;top:231.32px;width:78.00px;overflow:hidden;padding-left:2px;">histlistf</div>
<div class="t" style="left:16.00px;top:310.77px;width:39.00px;overflow:hidden;text-align:right;padding-right:1px;">1</div>
<div class="t" style="left:55.00px;top:310.77px;width:40.00px;overflow:hidden;padding-left:2px;">e2</div>
<div class="t" style="left:95.00px;top:367.52px;width:38.00px;overflow:hidden;text-align:right;padding-right:1px;">1</div>
<div style="position:absolute;left:133.00px;top:197.00px;width:141.00px;height:12.00px;background:#00ff00;"></div>
<div style="position:absolute;left:133.00px;top:197.00px;width:141.00px;height:80.00px;border:1px solid #000"></div>
<div class="t" style="left:133.00px;top:197.27px;width:102.00px;overflow:hidden;padding-left:2px;">File group</div>
<div class="cb" style="left:139px;top:209.10px"></div>
<div class="t" style="left:150px;top:207.60px;color:#333">file list</div>
<div class="cb" style="left:139px;top:222.30px"></div>
<div class="t" style="left:150px;top:220.80px;color:#333">note</div>
<div class="cb" style="left:139px;top:235.50px"></div>
<div class="t" style="left:150px;top:234.00px;color:#333">vb</div>
<div class="cb" style="left:139px;top:248.80px"></div>
<div class="t" style="left:150px;top:247.30px;color:#333">data file in zip</div>
<div class="cb" style="left:139px;top:260.70px"></div>
<div class="t" style="left:150px;top:259.20px;color:#333">aa</div>
<svg class="ic" style="left:140px;top:262px" width="8" height="8"><path d="M1 3.5l2 2.5l4-5" stroke="#000" stroke-width="1.5" fill="none"/></svg>
<div class="cb" style="left:200px;top:210.80px"></div>
<div class="t" style="left:211px;top:209.30px;color:#333">mp3</div>
<div class="cb" style="left:200px;top:223.50px"></div>
<div class="t" style="left:211px;top:222.00px;color:#333">swdl</div>
<div class="cb" style="left:200px;top:235.50px"></div>
<div class="t" style="left:211px;top:234.00px;color:#333">note2</div>
<div class="cb" style="left:200px;top:248.10px"></div>
<div class="t" style="left:211px;top:246.60px;color:#333">wrk</div>
<div class="cb" style="left:201px;top:260.50px"></div>
<div class="t" style="left:213px;top:259.00px;color:#333">codevba</div>
<div style="position:absolute;left:274.00px;top:197.00px;width:40.00px;height:12.00px;background:#00ff00;"></div>
<div style="position:absolute;left:274.00px;top:197.00px;width:40.00px;height:11.00px;border-left:1px solid #000;border-right:1px solid #000"></div>
<div class="t" style="left:274.00px;top:197.27px;width:40.00px;overflow:hidden;padding-left:2px;">Last search</div>
<div style="position:absolute;left:274.00px;top:197.00px;width:40.00px;height:1.00px;background:#000"></div>
<div style="position:absolute;left:274.00px;top:197.00px;width:40.00px;height:217.00px;border:1px solid #000"></div>
<div style="position:absolute;left:273.00px;top:208.00px;width:42.00px;height:127.00px;background:#fff;border:1px solid #a8a8a8;box-shadow:inset 0 0 0 1px #000"></div>
<div style="position:absolute;left:276.00px;top:220.00px;width:36.00px;height:113.00px;background:#abacd6"></div>
<div class="t" style="left:276px;top:208.15px;width:36px;overflow:hidden;color:#111">touch,</div>
<div class="t" style="left:276px;top:219.50px;width:36px;overflow:hidden;color:#111">touch,</div>
<div class="t" style="left:276px;top:230.85px;width:36px;overflow:hidden;color:#111">estim,price</div>
<div class="t" style="left:276px;top:242.20px;width:36px;overflow:hidden;color:#111">box,กล่อง</div>
<div class="t" style="left:276px;top:253.55px;width:36px;overflow:hidden;color:#111">box,กล่อง</div>
<div class="t" style="left:276px;top:264.90px;width:36px;overflow:hidden;color:#111">philth,filth</div>
<div class="t" style="left:276px;top:276.25px;width:36px;overflow:hidden;color:#111">winam,</div>
<div class="t" style="left:276px;top:287.60px;width:36px;overflow:hidden;color:#111">#delin,</div>
<div class="t" style="left:276px;top:298.95px;width:36px;overflow:hidden;color:#111">test,sony,</div>
<div class="t" style="left:276px;top:310.30px;width:36px;overflow:hidden;color:#111">test,sony</div>
<div class="t" style="left:276px;top:321.65px;width:36px;overflow:hidden;color:#111">xmit,sony</div>
<div style="position:absolute;left:314.00px;top:197.00px;width:152.00px;height:12.00px;background:#00ff00;"></div>
<div style="position:absolute;left:314.00px;top:197.00px;width:152.00px;height:217.00px;border:1px solid #000"></div>
<div style="position:absolute;left:426.00px;top:209.00px;width:1.00px;height:205.00px;background:#000"></div>
<div class="t" style="left:314px;top:197.30px;width:111px;text-align:right;letter-spacing:-0.75px">File group (value)</div>
<div class="t" style="left:314px;top:208.65px;width:113px;text-align:center;color:#222">FALSE</div>
<div class="t" style="left:429px;top:208.65px;color:#222">file list</div>
<div class="t" style="left:314px;top:220.00px;width:113px;text-align:center;color:#222">FALSE</div>
<div class="t" style="left:429px;top:220.00px;color:#222">note</div>
<div class="t" style="left:314px;top:231.35px;width:113px;text-align:center;color:#222">FALSE</div>
<div class="t" style="left:429px;top:231.35px;color:#222">vb</div>
<div class="t" style="left:314px;top:242.70px;width:113px;text-align:center;color:#222">FALSE</div>
<div class="t" style="left:429px;top:242.70px;color:#222">data file in zip</div>
<div class="t" style="left:314px;top:254.05px;width:113px;text-align:center;color:#222">TRUE</div>
<div class="t" style="left:429px;top:254.05px;color:#222">aa</div>
<div class="t" style="left:314px;top:265.40px;width:113px;text-align:center;color:#222">FALSE</div>
<div class="t" style="left:429px;top:265.40px;color:#222">mp3</div>
<div class="t" style="left:314px;top:276.75px;width:113px;text-align:center;color:#222">FALSE</div>
<div class="t" style="left:429px;top:276.75px;color:#222">swdl</div>
<div class="t" style="left:314px;top:288.10px;width:113px;text-align:center;color:#222">FALSE</div>
<div class="t" style="left:429px;top:288.10px;color:#222">note2</div>
<div class="t" style="left:314px;top:299.45px;width:113px;text-align:center;color:#222">FALSE</div>
<div class="t" style="left:429px;top:299.45px;color:#222">wrk</div>
<div class="t" style="left:314px;top:310.80px;width:113px;text-align:center;color:#222">FALSE</div>
<div class="t" style="left:429px;top:310.80px;color:#222">codevba</div>
<div class="t" style="left:314px;top:322.15px;width:113px;text-align:center;color:#222">FALSE</div>
<div class="t" style="left:429px;top:322.15px;color:#222">index</div>
<div class="t" style="left:314px;top:333.50px;width:113px;text-align:center;color:#222">FALSE</div>
<div class="t" style="left:429px;top:333.50px;color:#222">mail txt archive</div>
<div class="t" style="left:314px;top:344.85px;width:113px;text-align:center;color:#222">FALSE</div>
<div class="t" style="left:429px;top:344.85px;color:#222">htminfo</div>
<div class="t" style="left:314px;top:356.20px;width:113px;text-align:center;color:#222">FALSE</div>
<div class="t" style="left:429px;top:356.20px;color:#222">aa</div>
<div class="t" style="left:314px;top:367.55px;width:113px;text-align:center;color:#222">FALSE</div>
<div class="t" style="left:429px;top:367.55px;color:#222">file list2</div>
<div class="t" style="left:314px;top:378.90px;width:113px;text-align:center;color:#222">FALSE</div>
<div class="t" style="left:429px;top:378.90px;color:#222">aa</div>
<div class="t" style="left:314px;top:390.25px;width:113px;text-align:center;color:#222">FALSE</div>
<div class="t" style="left:429px;top:390.25px;color:#222">drv</div>
<div class="t" style="left:314px;top:401.60px;width:113px;text-align:center;color:#222">FALSE</div>
<div class="t" style="left:429px;top:401.60px;color:#222">aa</div>
<div style="position:absolute;left:133.00px;top:277.00px;width:64.00px;height:11.00px;background:#00ff00;"></div>
<div style="position:absolute;left:133.00px;top:276.00px;width:64.00px;height:137.00px;border:1px solid #000"></div>
<div class="t" style="left:133.00px;top:276.72px;width:141.00px;overflow:hidden;padding-left:2px;">Word list to search</div>
<div style="position:absolute;left:133.00px;top:402.00px;width:64.00px;height:11.00px;background:#00ff00;border:1px solid #000;height:12px"></div>
<div class="t" style="left:133.00px;top:401.57px;width:64.00px;overflow:hidden;padding-left:2px;">Sort result by</div>
<div class="t" style="left:133.00px;top:288.07px;width:64.00px;overflow:hidden;padding-left:2px;">xmit</div>
<div class="t" style="left:133.00px;top:299.42px;width:64.00px;overflow:hidden;padding-left:2px;">sony</div>
<div class="t" style="left:133.00px;top:310.77px;width:64.00px;overflow:hidden;padding-left:2px;">include</div>
<div style="position:absolute;left:134.00px;top:415.00px;width:69.00px;height:39.00px;background:#fff;border:1px solid #000;box-shadow:inset 1px 1px #808080"></div>
<div style="position:absolute;left:136.00px;top:416.00px;width:55.00px;height:10.00px;background:#0a246a"></div>
<div class="t" style="left:137px;top:415.3px;color:#fff;font-size:9px;letter-spacing:-0.3px">none</div>
<div class="t" style="left:137px;top:424.3px;font-size:9px;letter-spacing:-0.3px">filename-line</div>
<div style="position:absolute;left:191.00px;top:416.00px;width:11.00px;height:37.00px;background:#d4d0c8"></div>
<div style="position:absolute;left:191.00px;top:416.00px;width:11.00px;height:11.00px;background:#d4d0c8;border:1px solid;border-color:#fff #404040 #404040 #fff"></div>
<div style="position:absolute;left:191.00px;top:442.00px;width:11.00px;height:11.00px;background:#d4d0c8;border:1px solid;border-color:#fff #404040 #404040 #fff"></div>
<svg class="ic" style="left:191px;top:416px" width="11" height="37"><path d="M2 7h7l-3.5-4z" fill="#000"/><path d="M2 30h7l-3.5 4z" fill="#000"/></svg>
<div class="bn" style="left:215px;top:292px;width:49px;height:18px;line-height:19px">all check</div>
<div class="bn" style="left:214px;top:319px;width:50px;height:17px;line-height:18px">all clear</div>
<div class="bn" style="left:538px;top:254px;width:44px;height:19px;line-height:20px">Find</div>
<div class="bn" style="left:538px;top:281px;width:44px;height:18px;line-height:19px">rav ini</div>
<div class="bn" style="left:538px;top:308px;width:44px;height:19px;line-height:20px">load ini file</div>
<div class="bn" style="left:538px;top:336px;width:44px;height:18px;line-height:19px">call uedit</div>
<div class="nb" style="left:173px;top:177px;width:26px;height:20px;line-height:18px">2</div>
<div class="nb" style="left:152px;top:325px;width:27px;height:20px;line-height:18px">1</div>
<div class="nb" style="left:390px;top:223px;width:27px;height:21px;line-height:19px">2b</div>
<div class="nb" style="left:455px;top:223px;width:27px;height:20px;line-height:18px">2a</div>
<div class="nb" style="left:518px;top:242px;width:26px;height:19px;line-height:17px">4</div>
<div class="nb" style="left:513px;top:511px;width:27px;height:19px;line-height:17px">3</div>
<div style="position:absolute;left:235.00px;top:470.00px;width:348.00px;height:11.00px;background:#c6c6c6;"></div>
<div class="t" style="left:235.00px;top:469.67px;width:39.00px;overflow:hidden;padding-left:2px;">ff</div>
<div class="t" style="left:274.00px;top:469.67px;width:40.00px;overflow:hidden;padding-left:2px;">x</div>
<div class="t" style="left:314.00px;top:469.67px;width:113.00px;overflow:hidden;padding-left:2px;">ath</div>
<div class="t" style="left:466.00px;top:469.67px;width:39.00px;overflow:hidden;padding-left:2px;">a</div>
<div class="t" style="left:505.00px;top:469.67px;width:39.00px;overflow:hidden;text-align:right;padding-right:1px;">20</div>
<div class="t" style="left:544.00px;top:469.67px;width:39.00px;overflow:hidden;padding-left:2px;">a</div>
<div style="position:absolute;left:235.00px;top:492.00px;width:348.00px;height:12.00px;background:#00ff00;"></div>
<div style="position:absolute;left:235.00px;top:492.00px;width:348.00px;height:1.00px;background:#000"></div>
<div style="position:absolute;left:235.00px;top:503.00px;width:348.00px;height:1.00px;background:#000"></div>
<div style="position:absolute;left:263.00px;top:493.00px;width:11.00px;height:10.00px;background:#d4d0c8;border-right:1px solid #a0a0a0;border-left:1px solid #f0f0f0"></div>
<svg class="ic" style="left:263.00px;top:492.90px" width="11" height="10"><path d="M2 3.8h6l-3 3.2z" fill="#000"/></svg>
<div style="position:absolute;left:303.00px;top:493.00px;width:11.00px;height:10.00px;background:#d4d0c8;border-right:1px solid #a0a0a0;border-left:1px solid #f0f0f0"></div>
<svg class="ic" style="left:303.00px;top:492.90px" width="11" height="10"><path d="M2 3.8h6l-3 3.2z" fill="#000"/></svg>
<div style="position:absolute;left:416.00px;top:493.00px;width:10.00px;height:10.00px;background:#d4d0c8;border-right:1px solid #a0a0a0;border-left:1px solid #f0f0f0"></div>
<svg class="ic" style="left:416.00px;top:492.90px" width="11" height="10"><path d="M2 3.8h6l-3 3.2z" fill="#0000ff"/></svg>
<div style="position:absolute;left:455.00px;top:493.00px;width:11.00px;height:10.00px;background:#d4d0c8;border-right:1px solid #a0a0a0;border-left:1px solid #f0f0f0"></div>
<svg class="ic" style="left:455.00px;top:492.90px" width="11" height="10"><path d="M2 3.8h6l-3 3.2z" fill="#000"/></svg>
<div style="position:absolute;left:494.00px;top:493.00px;width:10.00px;height:10.00px;background:#d4d0c8;border-right:1px solid #a0a0a0;border-left:1px solid #f0f0f0"></div>
<svg class="ic" style="left:494.00px;top:492.90px" width="11" height="10"><path d="M2 3.8h6l-3 3.2z" fill="#000"/></svg>
<div style="position:absolute;left:533.00px;top:493.00px;width:11.00px;height:10.00px;background:#d4d0c8;border-right:1px solid #a0a0a0;border-left:1px solid #f0f0f0"></div>
<svg class="ic" style="left:533.00px;top:492.90px" width="11" height="10"><path d="M2 3.8h6l-3 3.2z" fill="#000"/></svg>
<div style="position:absolute;left:572.00px;top:493.00px;width:10.00px;height:10.00px;background:#d4d0c8;border-right:1px solid #a0a0a0;border-left:1px solid #f0f0f0"></div>
<svg class="ic" style="left:572.00px;top:492.90px" width="11" height="10"><path d="M2 3.8h6l-3 3.2z" fill="#000"/></svg>
<div class="t" style="left:235.00px;top:492.37px;width:39.00px;overflow:hidden;padding-left:2px;">type</div>
<div class="t" style="left:274.00px;top:492.37px;width:40.00px;overflow:hidden;padding-left:2px;">mark</div>
<div class="t" style="left:314.00px;top:492.37px;width:113.00px;overflow:hidden;padding-left:2px;">fname</div>
<div class="t" style="left:427.00px;top:492.37px;width:39.00px;overflow:hidden;padding-left:2px;">in cd</div>
<div class="t" style="left:466.00px;top:492.37px;width:39.00px;overflow:hidden;padding-left:2px;">cmnt</div>
<div class="t" style="left:505.00px;top:492.37px;width:39.00px;overflow:hidden;padding-left:2px;">slot</div>
<div style="position:absolute;left:235.00px;top:492.00px;width:1.00px;height:71.00px;background:#000"></div>
<div style="position:absolute;left:274.00px;top:492.00px;width:1.00px;height:71.00px;background:#000"></div>
<div style="position:absolute;left:313.00px;top:492.00px;width:1.00px;height:71.00px;background:#000"></div>
<div style="position:absolute;left:427.00px;top:492.00px;width:1.00px;height:71.00px;background:#000"></div>
<div style="position:absolute;left:466.00px;top:492.00px;width:1.00px;height:71.00px;background:#000"></div>
<div style="position:absolute;left:505.00px;top:492.00px;width:1.00px;height:71.00px;background:#000"></div>
<div style="position:absolute;left:544.00px;top:492.00px;width:1.00px;height:71.00px;background:#000"></div>
<div style="position:absolute;left:583.00px;top:492.00px;width:1.00px;height:71.00px;background:#000"></div>
<div class="t" style="left:235.00px;top:503.72px;width:39.00px;overflow:hidden;padding-left:2px;">wrk</div>
<div class="t" style="left:274.00px;top:503.72px;width:40.00px;overflow:hidden;padding-left:2px;">x</div>
<div class="t" style="left:316px;top:503.72px">d:\1zx1\synchome\new.txt</div>
<div class="t" style="left:235.00px;top:515.07px;width:39.00px;overflow:hidden;padding-left:2px;">wrk</div>
<div class="t" style="left:274.00px;top:515.07px;width:40.00px;overflow:hidden;padding-left:2px;">x</div>
<div class="t" style="left:316px;top:515.07px">d:\1zx1\tocath.txt</div>
<div class="t" style="left:235.00px;top:526.42px;width:39.00px;overflow:hidden;padding-left:2px;">wrk</div>
<div class="t" style="left:274.00px;top:526.42px;width:40.00px;overflow:hidden;padding-left:2px;">x</div>
<div class="t" style="left:316px;top:526.42px">d:\untitled2.txt</div>
<div class="t" style="left:235.00px;top:537.77px;width:39.00px;overflow:hidden;padding-left:2px;">wrk</div>
<div class="t" style="left:274.00px;top:537.77px;width:40.00px;overflow:hidden;padding-left:2px;">x</div>
<div class="t" style="left:316px;top:537.77px">e:\1zx1\skk6.txt</div>
<div class="t" style="left:235.00px;top:549.12px;width:39.00px;overflow:hidden;padding-left:2px;">mp3</div>
<div class="t" style="left:274.00px;top:549.12px;width:40.00px;overflow:hidden;padding-left:2px;">y</div>
<div class="t" style="left:316px;top:549.12px">d:\Program Files\Winamp191\cd01_i.m3u</div>
<div class="t" style="left:133.00px;top:503.72px;width:64.00px;overflow:hidden;padding-left:2px;">sony</div>
<div class="t" style="left:133.00px;top:515.07px;width:64.00px;overflow:hidden;padding-left:2px;">include</div>
<svg class="ic" style="left:129.00px;top:122.27px" width="4" height="4"><path d="M0 0h4v4z" fill="#f00"/></svg>
<svg class="ic" style="left:129.00px;top:145.01px" width="4" height="4"><path d="M0 0h4v4z" fill="#f00"/></svg>
<svg class="ic" style="left:231.00px;top:145.01px" width="4" height="4"><path d="M0 0h4v4z" fill="#f00"/></svg>
<svg class="ic" style="left:51.00px;top:310.80px" width="4" height="4"><path d="M0 0h4v4z" fill="#f00"/></svg>
<svg class="ic" style="left:91.00px;top:310.80px" width="4" height="4"><path d="M0 0h4v4z" fill="#f00"/></svg>
<svg class="ic" style="left:129.00px;top:367.55px" width="4" height="4"><path d="M0 0h4v4z" fill="#f00"/></svg>
<svg class="ic" style="left:193.00px;top:276.75px" width="4" height="4"><path d="M0 0h4v4z" fill="#f00"/></svg>
</body></html>
